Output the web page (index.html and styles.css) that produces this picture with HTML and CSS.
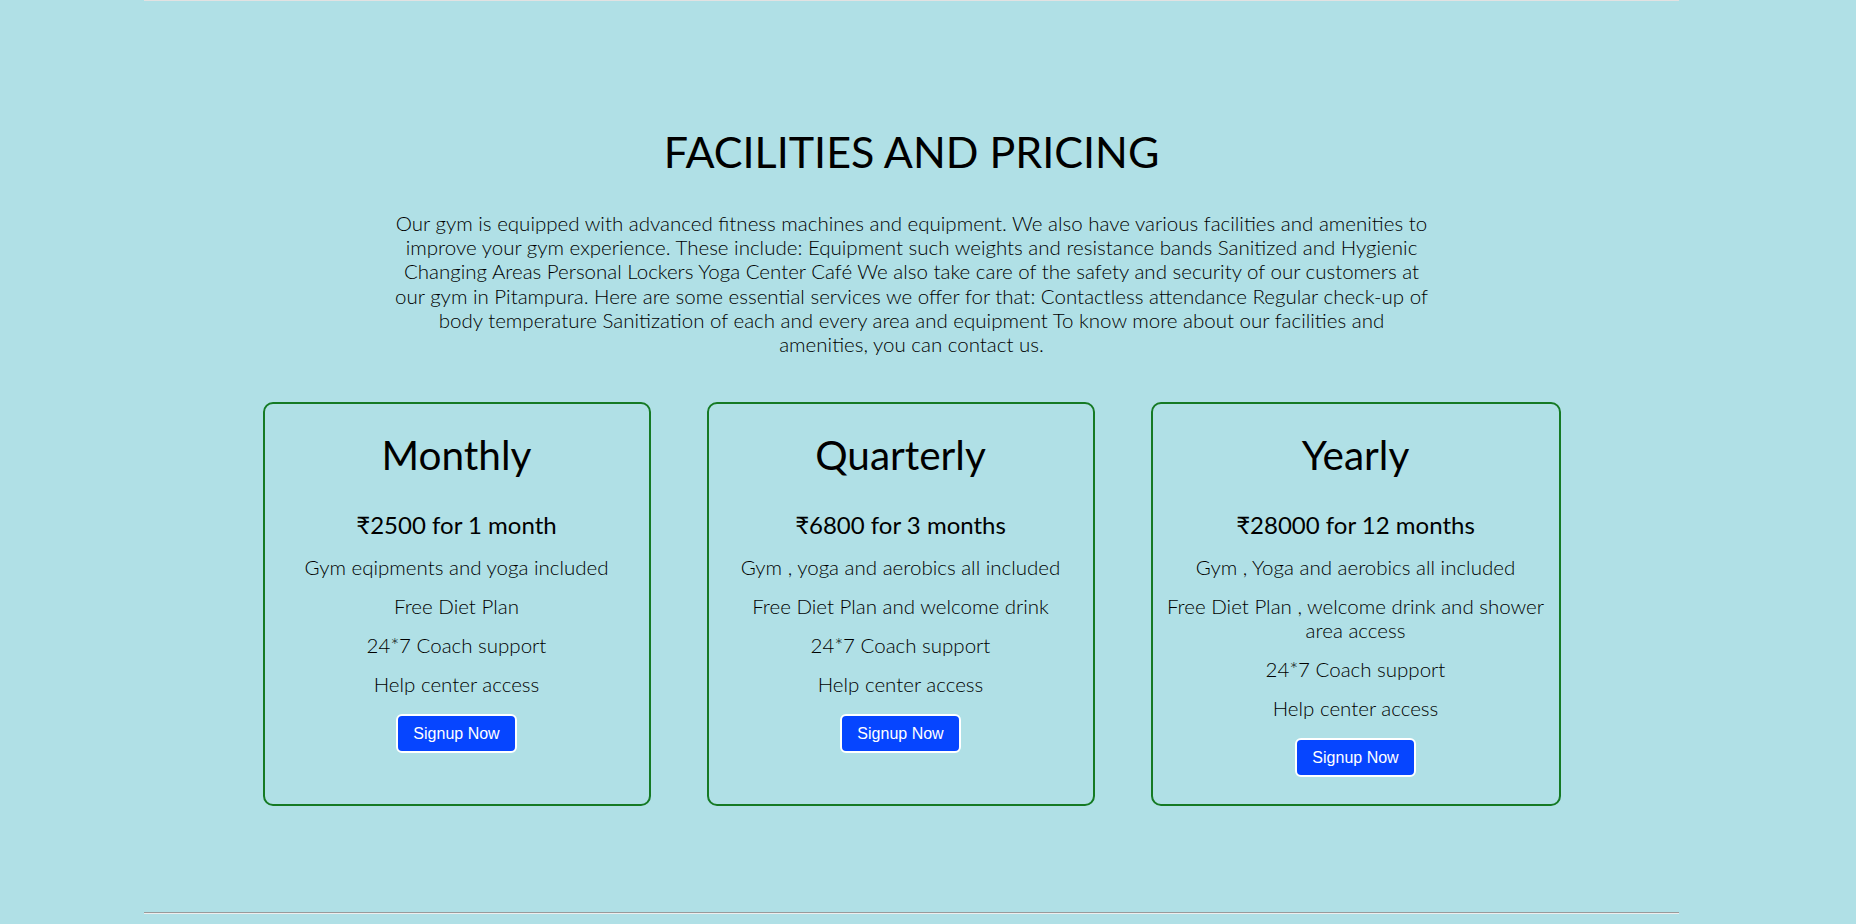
FILE: index.html
```html
<!DOCTYPE html>
<html lang="en">
<head>
<meta charset="utf-8">
<title>Facilities and Pricing</title>
<link rel="stylesheet" href="styles.css">
</head>
<body>
<div class="page">
  <div class="rule rule-top"></div>
  <section class="facilities">
    <h1 class="title">FACILITIES AND PRICING</h1>
    <p class="intro">Our gym is equipped with advanced fitness machines and equipment. We also have various facilities and amenities to improve your gym experience. These include: Equipment such weights and resistance bands Sanitized and Hygienic Changing Areas Personal Lockers Yoga Center Café We also take care of the safety and security of our customers at our gym in Pitampura. Here are some essential services we offer for that: Contactless attendance Regular check-up of body temperature Sanitization of each and every area and equipment To know more about our facilities and amenities,&nbsp;you can contact us.</p>
    <div class="plans">
      <div class="plan">
        <h2 class="plan-name">Monthly</h2>
        <p class="plan-price">₹2500 for 1 month</p>
        <p class="plan-feature">Gym eqipments and yoga included</p>
        <p class="plan-feature">Free Diet Plan</p>
        <p class="plan-feature">24*7 Coach support</p>
        <p class="plan-feature">Help center access</p>
        <button class="signup">Signup Now</button>
      </div>
      <div class="plan">
        <h2 class="plan-name">Quarterly</h2>
        <p class="plan-price">₹6800 for 3 months</p>
        <p class="plan-feature">Gym , yoga and aerobics all included</p>
        <p class="plan-feature">Free Diet Plan and welcome drink</p>
        <p class="plan-feature">24*7 Coach support</p>
        <p class="plan-feature">Help center access</p>
        <button class="signup">Signup Now</button>
      </div>
      <div class="plan plan-wide">
        <h2 class="plan-name">Yearly</h2>
        <p class="plan-price">₹28000 for 12 months</p>
        <p class="plan-feature">Gym , Yoga and aerobics all included</p>
        <p class="plan-feature">Free Diet Plan , welcome drink and shower area access</p>
        <p class="plan-feature">24*7 Coach support</p>
        <p class="plan-feature">Help center access</p>
        <button class="signup">Signup Now</button>
      </div>
    </div>
  </section>
  <div class="rule rule-bottom"></div>
</div>
</body>
</html>
```
FILE: styles.css
```css
html, body {
  margin: 0;
  padding: 0;
}
body {
  background: #b0e0e6;
  font-family: Lato, "Open Sans", sans-serif;
  color: #000;
  height: 924px;
  overflow: hidden;
}
.page {
  margin-left: 144px;
  width: 1535px;
}
.rule-top {
  height: 1px;
  background: #e2e2e2;
}
.rule-bottom {
  height: 1px;
  border-top: 1px solid #9a9a9a;
  background: #eeeeee;
}
.facilities {
  padding-top: 124px;
  padding-bottom: 106px;
  text-align: center;
}
.title {
  margin: 0 0 32px;
  font-size: 43px;
  line-height: 54px;
  font-weight: 400;
}
.intro {
  width: 1050px;
  margin: 0 auto 46px;
  font-size: 20.5px;
  line-height: 24.2px;
  font-weight: 300;
}
.plans {
  display: grid;
  grid-template-columns: 388px 388px 410px;
  column-gap: 56px;
  justify-content: center;
}
.plan {
  border: 2px solid #157a24;
  border-radius: 10px;
  padding: 26px 14px 27px;
}
.plan-name {
  margin: 0 0 31px;
  font-size: 40.5px;
  line-height: 49px;
  font-weight: 400;
}
.plan-price {
  margin: 0 0 15px;
  font-size: 24px;
  line-height: 30px;
  font-weight: 400;
}
.plan-feature {
  margin: 0 0 15px;
  font-size: 20.5px;
  line-height: 24px;
  font-weight: 300;
}
.signup {
  margin-top: 3px;
  height: 39px;
  padding: 0 15px;
  background: #0645ff;
  color: #fff;
  border: 2px solid #fff;
  border-radius: 6px;
  font-family: "Liberation Sans", Arial, sans-serif;
  font-size: 16px;
  cursor: pointer;
}
```
